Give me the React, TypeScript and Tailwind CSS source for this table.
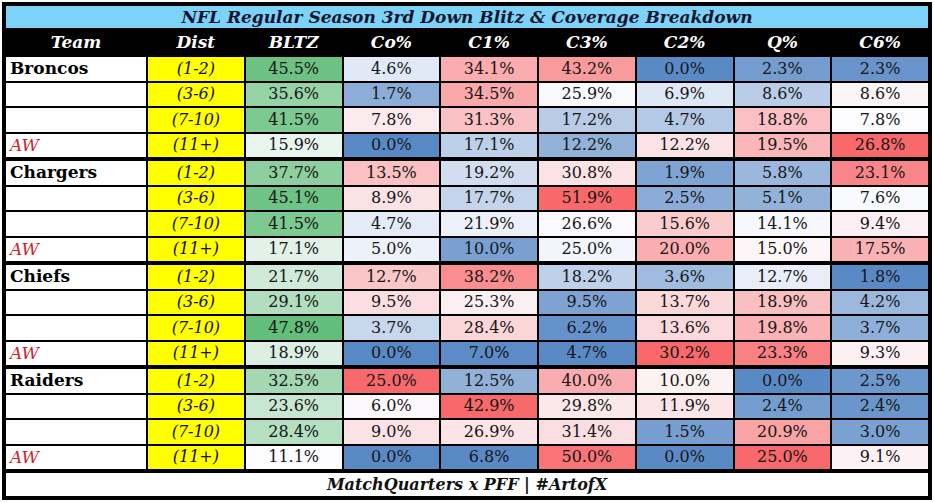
import React from "react";

type Row = { dist: string; v: number[] };
type Group = { team: string; rows: Row[] };

const groups: Group[] = [
  {
    team: "Broncos",
    rows: [
      { dist: "(1-2)", v: [45.5, 4.6, 34.1, 43.2, 0.0, 2.3, 2.3] },
      { dist: "(3-6)", v: [35.6, 1.7, 34.5, 25.9, 6.9, 8.6, 8.6] },
      { dist: "(7-10)", v: [41.5, 7.8, 31.3, 17.2, 4.7, 18.8, 7.8] },
      { dist: "(11+)", v: [15.9, 0.0, 17.1, 12.2, 12.2, 19.5, 26.8] },
    ],
  },
  {
    team: "Chargers",
    rows: [
      { dist: "(1-2)", v: [37.7, 13.5, 19.2, 30.8, 1.9, 5.8, 23.1] },
      { dist: "(3-6)", v: [45.1, 8.9, 17.7, 51.9, 2.5, 5.1, 7.6] },
      { dist: "(7-10)", v: [41.5, 4.7, 21.9, 26.6, 15.6, 14.1, 9.4] },
      { dist: "(11+)", v: [17.1, 5.0, 10.0, 25.0, 20.0, 15.0, 17.5] },
    ],
  },
  {
    team: "Chiefs",
    rows: [
      { dist: "(1-2)", v: [21.7, 12.7, 38.2, 18.2, 3.6, 12.7, 1.8] },
      { dist: "(3-6)", v: [29.1, 9.5, 25.3, 9.5, 13.7, 18.9, 4.2] },
      { dist: "(7-10)", v: [47.8, 3.7, 28.4, 6.2, 13.6, 19.8, 3.7] },
      { dist: "(11+)", v: [18.9, 0.0, 7.0, 4.7, 30.2, 23.3, 9.3] },
    ],
  },
  {
    team: "Raiders",
    rows: [
      { dist: "(1-2)", v: [32.5, 25.0, 12.5, 40.0, 10.0, 0.0, 2.5] },
      { dist: "(3-6)", v: [23.6, 6.0, 42.9, 29.8, 11.9, 2.4, 2.4] },
      { dist: "(7-10)", v: [28.4, 9.0, 26.9, 31.4, 1.5, 20.9, 3.0] },
      { dist: "(11+)", v: [11.1, 0.0, 6.8, 50.0, 0.0, 25.0, 9.1] },
    ],
  },
];

const headers = ["Team", "Dist", "BLTZ", "Co%", "C1%", "C3%", "C2%", "Q%", "C6%"];

const BLUE = [90, 138, 198];
const WHITE = [252, 252, 255];
const RED = [248, 105, 107];
const GREEN = [99, 190, 123];

const mix = (a: number[], b: number[], t: number) =>
  `rgb(${a.map((x, i) => Math.round(x + (b[i] - x) * t)).join(",")})`;

const allRows = groups.flatMap((g) => g.rows);
const stats = [0, 1, 2, 3, 4, 5, 6].map((c) => {
  const vals = allRows.map((r) => r.v[c]).sort((a, b) => a - b);
  const n = vals.length;
  const med = n % 2 ? vals[(n - 1) / 2] : (vals[n / 2 - 1] + vals[n / 2]) / 2;
  return { min: vals[0], max: vals[n - 1], med };
});

function colorFor(c: number, v: number) {
  const s = stats[c];
  if (c === 0) {
    const t = (v - s.min) / (s.max - s.min || 1);
    return mix(WHITE, GREEN, t);
  }
  if (v <= s.med) {
    const t = (s.med - v) / (s.med - s.min || 1);
    return mix(WHITE, BLUE, t);
  }
  const t = (v - s.med) / (s.max - s.med || 1);
  return mix(WHITE, RED, t);
}

const gridCols = "grid grid-cols-[140px_repeat(8,minmax(0,1fr))] gap-x-[2px]";

export default function App() {
  return (
    <div className="w-[934px] h-[502px] bg-white pt-[2px] pl-[2px] font-['DejaVu_Serif',serif]">
      <div className="w-[930px] h-[498px] border-[4px] border-black bg-black flex flex-col">
        <div className="h-[22px] bg-[#7dd3f7] flex items-center justify-center text-[17px] font-bold italic text-[#14142e] leading-none">
          NFL Regular Season 3rd Down Blitz &amp; Coverage Breakdown
        </div>
        <div className={`${gridCols} h-[29px] bg-black`}>
          {headers.map((h) => (
            <div
              key={h}
              className="flex items-center justify-center text-white font-bold italic text-[17px] leading-none"
            >
              {h}
            </div>
          ))}
        </div>
        <div className="flex flex-col gap-[4px]">
          {groups.map((g) => (
            <div key={g.team} className="flex flex-col gap-[2px]">
              {g.rows.map((r, i) => (
                <div key={r.dist} className={`${gridCols} h-[23.5px]`}>
                  <div className="bg-white flex items-center pl-[4px] leading-none">
                    {i === 0 ? (
                      <span className="font-bold text-[17px] text-black">{g.team}</span>
                    ) : i === 3 ? (
                      <span className="italic text-[17px] text-[#d2232a]">AW</span>
                    ) : null}
                  </div>
                  <div className="bg-[#ffff00] flex items-center justify-center italic text-[16px] text-[#111] leading-none">
                    {r.dist}
                  </div>
                  {r.v.map((v, c) => (
                    <div
                      key={c}
                      className="flex items-center justify-center text-[16px] text-[#161616] leading-none"
                      style={{ backgroundColor: colorFor(c, v) }}
                    >
                      {v.toFixed(1)}%
                    </div>
                  ))}
                </div>
              ))}
            </div>
          ))}
        </div>
        <div className="mt-[4px] flex-1 bg-white flex items-center justify-center font-bold italic text-[16px] text-[#111] leading-none">
          MatchQuarters x PFF | #ArtofX
        </div>
      </div>
    </div>
  );
}
